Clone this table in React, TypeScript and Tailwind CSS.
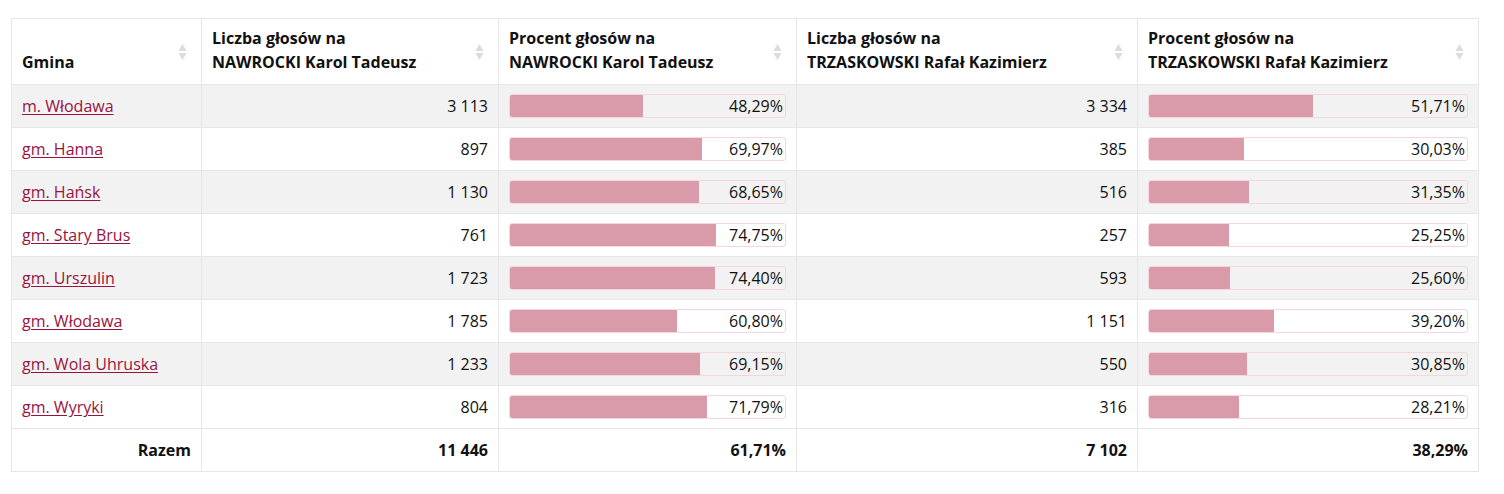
import React from "react";

type Row = {
  name: string;
  nVotes: string;
  nPct: number;
  tVotes: string;
  tPct: number;
};

const rows: Row[] = [
  { name: "m. Włodawa", nVotes: "3 113", nPct: 48.29, tVotes: "3 334", tPct: 51.71 },
  { name: "gm. Hanna", nVotes: "897", nPct: 69.97, tVotes: "385", tPct: 30.03 },
  { name: "gm. Hańsk", nVotes: "1 130", nPct: 68.65, tVotes: "516", tPct: 31.35 },
  { name: "gm. Stary Brus", nVotes: "761", nPct: 74.75, tVotes: "257", tPct: 25.25 },
  { name: "gm. Urszulin", nVotes: "1 723", nPct: 74.4, tVotes: "593", tPct: 25.6 },
  { name: "gm. Włodawa", nVotes: "1 785", nPct: 60.8, tVotes: "1 151", tPct: 39.2 },
  { name: "gm. Wola Uhruska", nVotes: "1 233", nPct: 69.15, tVotes: "550", tPct: 30.85 },
  { name: "gm. Wyryki", nVotes: "804", nPct: 71.79, tVotes: "316", tPct: 28.21 },
];

const fmt = (v: number) => v.toFixed(2).replace(".", ",") + "%";

function SortIcon() {
  return (
    <svg
      className="absolute right-[14px] top-1/2 -translate-y-1/2"
      width="9"
      height="18"
      viewBox="0 0 9 18"
    >
      <path d="M4.5 1 L8.5 8 L0.5 8 Z" fill="#dcdcdc" />
      <path d="M4.5 17 L8.5 10 L0.5 10 Z" fill="#dcdcdc" />
    </svg>
  );
}

function Bar({ pct }: { pct: number }) {
  return (
    <div className="relative h-[24px] rounded-[3px] border border-[#f3d6de] overflow-hidden">
      <div className="absolute left-0 top-0 bottom-0 bg-[#d99ba9]" style={{ width: `${pct}%` }} />
      <div className="relative text-right pr-[2px] leading-[22px]">{fmt(pct)}</div>
    </div>
  );
}

const th = "relative border border-[#e6e6e6] px-[10px] pt-[7px] pb-[10px] align-bottom text-left font-bold leading-[24px]";
const td = "border border-[#e6e6e6] px-[10px] py-[9px] leading-[24px]";

export default function App() {
  return (
    <div className="bg-white min-h-[494px] pt-[18px] pl-[11px] text-[16px] text-[#111] font-['Open_Sans',sans-serif]">
      <table className="table-fixed border-collapse w-[1467px]">
        <colgroup>
          <col className="w-[190px]" />
          <col className="w-[297px]" />
          <col className="w-[298px]" />
          <col className="w-[341px]" />
          <col className="w-[341px]" />
        </colgroup>
        <thead>
          <tr className="h-[66px]">
            <th className={th}>
              Gmina
              <SortIcon />
            </th>
            <th className={th}>
              Liczba głosów na
              <br />
              NAWROCKI Karol Tadeusz
              <SortIcon />
            </th>
            <th className={th}>
              Procent głosów na
              <br />
              NAWROCKI Karol Tadeusz
              <SortIcon />
            </th>
            <th className={th}>
              Liczba głosów na
              <br />
              TRZASKOWSKI Rafał Kazimierz
              <SortIcon />
            </th>
            <th className={th}>
              Procent głosów na
              <br />
              TRZASKOWSKI Rafał Kazimierz
              <SortIcon />
            </th>
          </tr>
        </thead>
        <tbody>
          {rows.map((r, i) => (
            <tr key={r.name} className={`h-[43px] ${i % 2 === 0 ? "bg-[#f2f2f2]" : "bg-white"}`}>
              <td className={td}>
                <a href="#" className="text-[#9a1240] underline underline-offset-[2px]">
                  {r.name}
                </a>
              </td>
              <td className={`${td} text-right`}>{r.nVotes}</td>
              <td className={`${td} py-0`}>
                <Bar pct={r.nPct} />
              </td>
              <td className={`${td} text-right`}>{r.tVotes}</td>
              <td className={`${td} py-0`}>
                <Bar pct={r.tPct} />
              </td>
            </tr>
          ))}
        </tbody>
        <tfoot>
          <tr className="h-[41px] font-bold">
            <td className={`${td} py-0 text-right`}>Razem</td>
            <td className={`${td} py-0 text-right`}>11 446</td>
            <td className={`${td} py-0 text-right`}>61,71%</td>
            <td className={`${td} py-0 text-right`}>7 102</td>
            <td className={`${td} py-0 text-right`}>38,29%</td>
          </tr>
        </tfoot>
      </table>
    </div>
  );
}
